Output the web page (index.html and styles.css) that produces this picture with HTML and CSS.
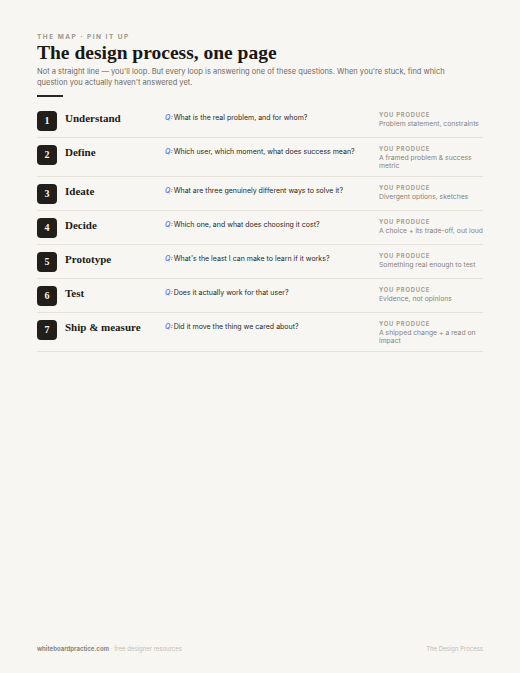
FILE: index.html
```html
<!DOCTYPE html>
<html lang="en">
<head>
<meta charset="utf-8">
<title>The design process, one page</title>
<link rel="stylesheet" href="styles.css">
</head>
<body>
<div class="page">
  <header class="head">
    <div class="eyebrow">THE MAP · PIN IT UP</div>
    <h1 class="title">The design process, one page</h1>
    <p class="lede">Not a straight line — you'll loop. But every loop is answering one of these questions. When you're stuck, find which question you actually haven't answered yet.</p>
    <div class="rule"></div>
  </header>

  <div class="steps">
    <div class="step">
      <div class="badge">1</div>
      <div class="name">Understand</div>
      <div class="q"><span class="qmark">Q:</span>What is the real problem, and for whom?</div>
      <div class="out"><div class="out-label">YOU PRODUCE</div><div class="out-text">Problem statement, constraints</div></div>
    </div>
    <div class="step">
      <div class="badge">2</div>
      <div class="name">Define</div>
      <div class="q"><span class="qmark">Q:</span>Which user, which moment, what does success mean?</div>
      <div class="out"><div class="out-label">YOU PRODUCE</div><div class="out-text">A framed problem &amp; success metric</div></div>
    </div>
    <div class="step">
      <div class="badge">3</div>
      <div class="name">Ideate</div>
      <div class="q"><span class="qmark">Q:</span>What are three genuinely different ways to solve it?</div>
      <div class="out"><div class="out-label">YOU PRODUCE</div><div class="out-text">Divergent options, sketches</div></div>
    </div>
    <div class="step">
      <div class="badge">4</div>
      <div class="name">Decide</div>
      <div class="q"><span class="qmark">Q:</span>Which one, and what does choosing it cost?</div>
      <div class="out"><div class="out-label">YOU PRODUCE</div><div class="out-text">A choice + its trade-off, out loud</div></div>
    </div>
    <div class="step">
      <div class="badge">5</div>
      <div class="name">Prototype</div>
      <div class="q"><span class="qmark">Q:</span>What's the least I can make to learn if it works?</div>
      <div class="out"><div class="out-label">YOU PRODUCE</div><div class="out-text">Something real enough to test</div></div>
    </div>
    <div class="step">
      <div class="badge">6</div>
      <div class="name">Test</div>
      <div class="q"><span class="qmark">Q:</span>Does it actually work for that user?</div>
      <div class="out"><div class="out-label">YOU PRODUCE</div><div class="out-text">Evidence, not opinions</div></div>
    </div>
    <div class="step">
      <div class="badge">7</div>
      <div class="name">Ship &amp; measure</div>
      <div class="q"><span class="qmark">Q:</span>Did it move the thing we cared about?</div>
      <div class="out"><div class="out-label">YOU PRODUCE</div><div class="out-text">A shipped change + a read on impact</div></div>
    </div>
  </div>

  <footer class="foot">
    <div class="foot-left"><span class="site">whiteboardpractice.com</span> · free designer resources</div>
    <div class="foot-right">The Design Process</div>
  </footer>
</div>
</body>
</html>
```

FILE: styles.css
```css
* { box-sizing: border-box; }
html, body {
  margin: 0;
  padding: 0;
  background: #f8f6f2;
}
body {
  font-family: Inter, "Noto Sans", sans-serif;
  color: #1c1a17;
}
.page {
  width: 520px;
  height: 673px;
  padding: 33px 37px 0 37px;
  display: flex;
  flex-direction: column;
}
.eyebrow {
  font-size: 6.5px;
  font-weight: 700;
  letter-spacing: 1.5px;
  color: #9d968c;
  line-height: 8px;
}
.title {
  margin: 1px 0 0 0;
  font-family: "Liberation Serif", "Times New Roman", serif;
  font-weight: 700;
  font-size: 19.5px;
  line-height: 22px;
  color: #1a1714;
}
.lede {
  margin: 2px 0 0 0;
  font-size: 7.5px;
  line-height: 11px;
  color: #6f6a62;
  max-width: 412px;
}
.rule {
  margin-top: 6.5px;
  width: 26px;
  height: 2px;
  background: #2a2622;
}
.steps {
  margin-top: 7px;
  display: flex;
  flex-direction: column;
}
.step {
  display: grid;
  grid-template-columns: 20px 92px 206px 1fr;
  column-gap: 8px;
  align-items: start;
  padding: 7px 0 6px 0;
  border-bottom: 1px solid #e6e2da;
}
.badge {
  width: 20px;
  height: 20px;
  border-radius: 4px;
  background: #221e19;
  color: #f8f6f2;
  font-family: "Liberation Serif", serif;
  font-weight: 700;
  font-size: 10px;
  display: flex;
  align-items: center;
  justify-content: center;
}
.name {
  font-family: "Liberation Serif", serif;
  font-weight: 700;
  font-size: 11px;
  line-height: 14px;
  color: #1c1a17;
}
.q {
  font-size: 7px;
  line-height: 11px;
  color: #2b2824;
  margin-top: 1.5px;
}
.qmark {
  font-style: italic;
  font-weight: 600;
  color: #6679e6;
  margin-right: 1px;
}
.out-label {
  font-size: 5.8px;
  font-weight: 700;
  letter-spacing: 0.8px;
  color: #a69e92;
  line-height: 8px;
}
.out-text {
  font-size: 6.8px;
  line-height: 8px;
  color: #8a847a;
  margin-top: 1px;
}
.foot {
  margin-top: auto;
  margin-bottom: 21px;
  display: flex;
  justify-content: space-between;
  font-size: 6px;
  color: #c2bcb2;
}
.site {
  font-weight: 700;
  color: #8c877f;
}
.foot-right {
  color: #c2bcb2;
}
```
